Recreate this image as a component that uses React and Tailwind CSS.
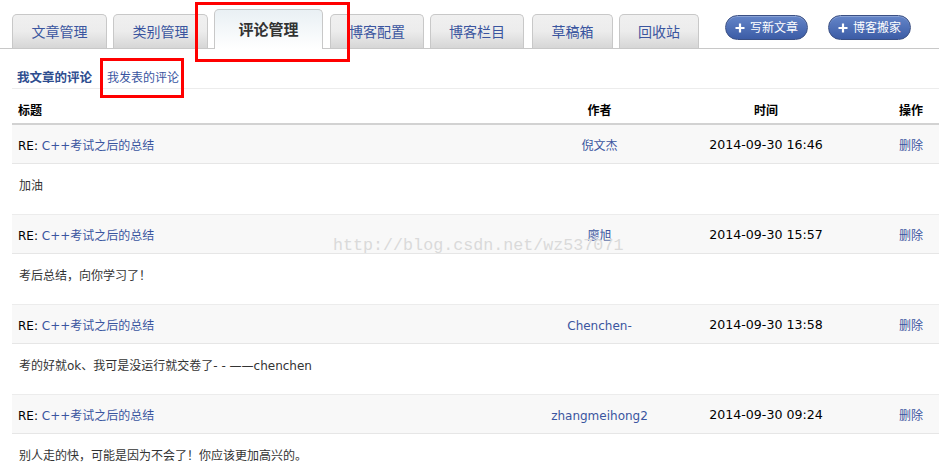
import React from 'react';

const tabs = [
  { label: '文章管理', w: 'w-[95px]' },
  { label: '类别管理', w: 'w-[95px]' },
  { label: '评论管理', w: 'w-[109px]', active: true },
  { label: '博客配置', w: 'w-[94px]' },
  { label: '博客栏目', w: 'w-[94px]' },
  { label: '草稿箱', w: 'w-[81px]' },
  { label: '回收站', w: 'w-[80px]' },
];

const comments = [
  { author: '倪文杰', time: '2014-09-30 16:46', body: '加油' },
  { author: '廖旭', time: '2014-09-30 15:57', body: '考后总结，向你学习了！' },
  { author: 'Chenchen-', time: '2014-09-30 13:58', body: '考的好就ok、我可是没运行就交卷了- - ——chenchen' },
  { author: 'zhangmeihong2', time: '2014-09-30 09:24', body: '别人走的快，可能是因为不会了！你应该更加高兴的。' },
];

const cols = 'grid grid-cols-[490px_195px_138px_1fr]';

const PlusButton = ({ children }) => (
  <button className="self-start mt-[15px] h-[25px] w-[83px] rounded-full border border-[#3b5084] bg-gradient-to-b from-[#6485c8] to-[#3c5ca6] text-white text-[12px] flex items-center justify-center gap-[5px] shadow-[inset_0_1px_0_rgba(255,255,255,0.25)]">
    <svg width="10" height="10" viewBox="0 0 10 10">
      <path d="M5 0.5v9M0.5 5h9" stroke="white" strokeWidth="2.2" />
    </svg>
    <span>{children}</span>
  </button>
);

export default function App() {
  return (
    <div className="relative w-[939px] h-[473px] overflow-hidden bg-white font-['DejaVu_Sans','Noto_Sans_CJK_SC',sans-serif] text-[12px] text-[#222]">
      {/* tab bar */}
      <div className="flex items-end h-[49px] pl-[12px] border-b border-[#c8c8c8]">
        {tabs.map((t, i) =>
          t.active ? (
            <div
              key={t.label}
              className={`${t.w} h-[40px] -mb-px mr-[7px] rounded-t-[5px] border border-b-0 border-[#c8c8c8] bg-gradient-to-b from-[#e9f0f4] to-white flex items-center justify-center pt-[2px] text-[15px] font-bold text-[#333]`}
            >
              {t.label}
            </div>
          ) : (
            <div
              key={t.label}
              className={`${t.w} h-[34px] ${i === 4 ? 'mr-[8px]' : 'mr-[6px]'} rounded-t-[5px] border border-b-0 border-[#c8c8c8] bg-gradient-to-b from-[#f0f0f0] via-[#ececec] to-[#d6d6d6] flex items-center justify-center pt-[2px] text-[14px] text-[#3a559f]`}
            >
              {t.label}
            </div>
          )
        )}
        <div className="ml-[20px] flex gap-[20px] self-stretch">
          <PlusButton>写新文章</PlusButton>
          <PlusButton>博客搬家</PlusButton>
        </div>
      </div>

      {/* sub tabs */}
      <div className="ml-[12px] h-[40px] flex items-end gap-[15px] px-[5px] pb-[2px] leading-[16px] border-b border-[#ececec]">
        <span className="font-bold text-[12.5px] text-[#2d4d8f]">我文章的评论</span>
        <span className="text-[12px] text-[#3a559f]">我发表的评论</span>
      </div>

      {/* table */}
      <div className="ml-[12px]">
        <div className={`${cols} h-[36px] items-end pb-[4px] leading-[16px] border-b-2 border-[#d2d2d2] font-bold text-[12px] text-black`}>
          <div className="pl-[6px]">标题</div>
          <div className="text-center">作者</div>
          <div className="text-center">时间</div>
          <div className="text-right pr-[16px]">操作</div>
        </div>

        {comments.map((c) => (
          <div key={c.time}>
            <div className={`${cols} h-[39px] pt-[3px] items-center bg-[#f8f8f8] border-b border-[#e6e6e6]`}>
              <div className="pl-[6px] text-black">
                RE: <span className="text-[#3a559f]">C++考试之后的总结</span>
              </div>
              <div className="text-center text-[#3a559f]">{c.author}</div>
              <div className="text-center text-black text-[12.6px]">{c.time}</div>
              <div className="text-right pr-[16px] text-[#3a559f]">删除</div>
            </div>
            <div className="h-[51px] pt-[14px] pl-[7px] leading-[16px] text-[#333] border-b border-[#ececec]">
              {c.body}
            </div>
          </div>
        ))}
      </div>

      {/* watermark */}
      <div className="absolute left-[333px] top-[236px] font-['Liberation_Mono',monospace] text-[16.7px] text-[#dadada] leading-[20px] pointer-events-none">
        http://blog.csdn.net/wz537071
      </div>

      {/* red annotation boxes */}
      <div className="absolute left-[195px] top-[2px] w-[155px] h-[60px] border-[3px] border-[#ff0000] pointer-events-none" />
      <div className="absolute left-[100px] top-[58px] w-[84px] h-[40px] border-[3px] border-[#ff0000] pointer-events-none" />
    </div>
  );
}
